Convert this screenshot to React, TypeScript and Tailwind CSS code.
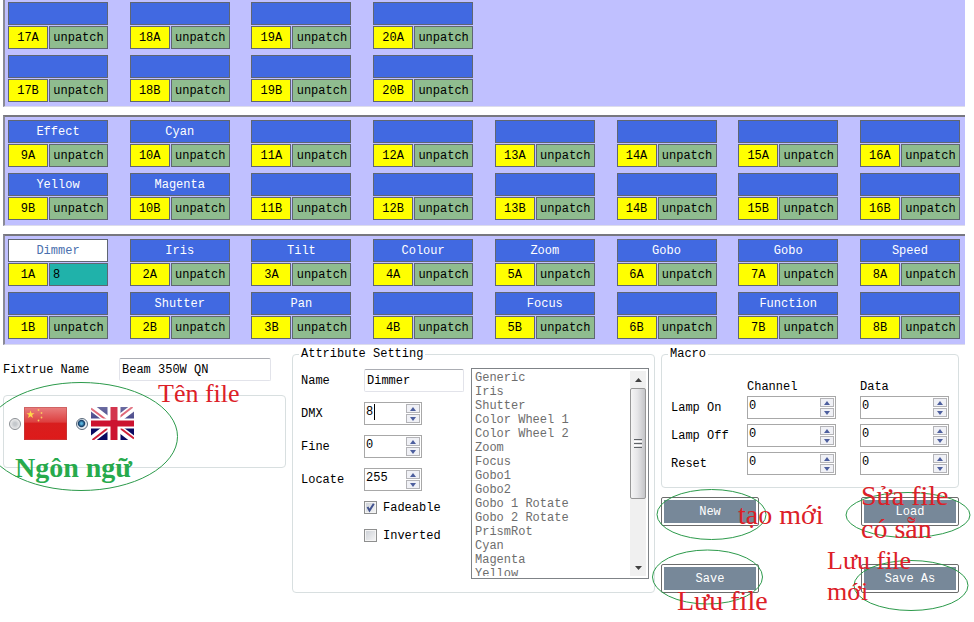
import { useState } from "react"

type Channel = {
  id: string
  name?: string
  value?: string
}

const banks: Channel[][] = [
  [
    { id: "17A" },
    { id: "18A" },
    { id: "19A" },
    { id: "20A" },
    { id: "17B" },
    { id: "18B" },
    { id: "19B" },
    { id: "20B" },
  ],
  [
    { id: "9A", name: "Effect" },
    { id: "10A", name: "Cyan" },
    { id: "11A" },
    { id: "12A" },
    { id: "13A" },
    { id: "14A" },
    { id: "15A" },
    { id: "16A" },
    { id: "9B", name: "Yellow" },
    { id: "10B", name: "Magenta" },
    { id: "11B" },
    { id: "12B" },
    { id: "13B" },
    { id: "14B" },
    { id: "15B" },
    { id: "16B" },
  ],
  [
    { id: "1A", name: "Dimmer", value: "8" },
    { id: "2A", name: "Iris" },
    { id: "3A", name: "Tilt" },
    { id: "4A", name: "Colour" },
    { id: "5A", name: "Zoom" },
    { id: "6A", name: "Gobo" },
    { id: "7A", name: "Gobo" },
    { id: "8A", name: "Speed" },
    { id: "1B" },
    { id: "2B", name: "Shutter" },
    { id: "3B", name: "Pan" },
    { id: "4B" },
    { id: "5B", name: "Focus" },
    { id: "6B" },
    { id: "7B", name: "Function" },
    { id: "8B" },
  ],
]

const attributes = [
  "Generic",
  "Iris",
  "Shutter",
  "Color Wheel 1",
  "Color Wheel 2",
  "Zoom",
  "Focus",
  "Gobo1",
  "Gobo2",
  "Gobo 1 Rotate",
  "Gobo 2 Rotate",
  "PrismRot",
  "Cyan",
  "Magenta",
  "Yellow",
]

function ChannelCell({ channel }: { channel: Channel }) {
  const active = channel.value !== undefined
  return (
    <div className="flex flex-col gap-px">
      <button
        type="button"
        aria-label={channel.name ? undefined : `Channel ${channel.id}`}
        className={
          active
            ? "h-[23px] border border-[#5f6672] bg-white text-[#4a6fae]"
            : "h-[23px] border border-[#5f6672] bg-[#4169e1] text-white"
        }
      >
        {channel.name}
      </button>
      <div className="flex gap-px">
        <label
          htmlFor={`ch-${channel.id}`}
          className="flex h-[23px] w-10 items-center justify-center border border-[#5f6672] bg-[#ffff00]"
        >
          {channel.id}
        </label>
        <input
          id={`ch-${channel.id}`}
          readOnly
          value={channel.value ?? "unpatch"}
          className={
            active
              ? "h-[23px] min-w-0 flex-1 border border-[#5f6672] bg-[#20b2aa] pl-[3px]"
              : "h-[23px] min-w-0 flex-1 border border-[#5f6672] bg-[#8fbc8f] text-center"
          }
        />
      </div>
    </div>
  )
}

// Bank with 4 or 8 columns, the A row above the B row
function Bank({ channels, first }: { channels: Channel[]; first?: boolean }) {
  const perRow = channels.length / 2
  const rows = [channels.slice(0, perRow), channels.slice(perRow)]
  return (
    <section
      className={
        first
          ? "flex flex-col gap-1.5 border-b border-l-2 border-b-[#dcdcec] border-l-[#8a8a96] bg-[#c0c0ff] pt-0.5 pr-[5px] pb-1 pl-[3px]"
          : "flex flex-col gap-1.5 border-t-2 border-b border-l-2 border-t-[#77777f] border-b-[#dcdcec] border-l-[#8a8a96] bg-[#c0c0ff] pt-[3px] pr-[5px] pb-[5px] pl-[3px]"
      }
    >
      {rows.map((row) => (
        <div key={row[0].id} className="grid grid-cols-[repeat(8,100px)] justify-between">
          {row.map((channel) => (
            <ChannelCell key={channel.id} channel={channel} />
          ))}
        </div>
      ))}
    </section>
  )
}

function Spinner({ id, label, initial, caret }: { id: string; label: string; initial: number; caret?: boolean }) {
  const [value, setValue] = useState(initial)
  return (
    <div className="flex h-[23px] border border-[#a8a8a8] bg-white p-px">
      <div className="flex min-w-0 flex-1 items-start">
        <input
          id={id}
          aria-label={label}
          value={value}
          onChange={(e) => setValue(Number(e.target.value) || 0)}
          className={
            caret
              ? "h-4 w-[9px] border-r border-black outline-none"
              : "h-4 w-full min-w-0 outline-none"
          }
        />
      </div>
      <div className="flex w-[14px] flex-col gap-px">
        <button
          type="button"
          aria-label={`${label} up`}
          onClick={() => setValue(value + 1)}
          className="flex flex-1 items-center justify-center border border-[#b4b4b8] bg-[#f0f1f6]"
        >
          <svg width="6" height="4" viewBox="0 0 6 4">
            <path d="M0 4 3 0 6 4z" fill="#4d5f9e" />
          </svg>
        </button>
        <button
          type="button"
          aria-label={`${label} down`}
          onClick={() => setValue(Math.max(0, value - 1))}
          className="flex flex-1 items-center justify-center border border-[#b4b4b8] bg-[#f0f1f6]"
        >
          <svg width="6" height="4" viewBox="0 0 6 4">
            <path d="M0 0 3 4 6 0z" fill="#4d5f9e" />
          </svg>
        </button>
      </div>
    </div>
  )
}

function ChinaFlag() {
  return (
    <svg width="43" height="33" viewBox="0 0 43 33">
      <defs>
        <linearGradient id="cn" x1="0" y1="0" x2="0" y2="1">
          <stop offset="0" stopColor="#e98080" />
          <stop offset="0.45" stopColor="#dd4040" />
          <stop offset="0.5" stopColor="#d81e1e" />
          <stop offset="1" stopColor="#de1a1a" />
        </linearGradient>
      </defs>
      <rect width="43" height="33" fill="url(#cn)" />
      <path d="M6.5 3.5l1 2.8h3l-2.4 1.8.9 2.9-2.5-1.8L4 11l.9-2.9-2.4-1.8h3z" fill="#ffd84a" />
      <g fill="#f8c860">
        <circle cx="14.5" cy="3" r="0.9" />
        <circle cx="17.5" cy="6" r="0.9" />
        <circle cx="17.5" cy="10.5" r="0.9" />
        <circle cx="14.5" cy="13.5" r="0.9" />
      </g>
      <rect x="0.5" y="0.5" width="42" height="32" fill="none" stroke="#b84848" strokeOpacity="0.5" />
    </svg>
  )
}

function UnionJack() {
  return (
    <svg width="43" height="33" viewBox="0 0 43 33">
      <defs>
        <linearGradient id="gloss" x1="0" y1="0" x2="0" y2="1">
          <stop offset="0" stopColor="#fff" stopOpacity="0.4" />
          <stop offset="1" stopColor="#fff" stopOpacity="0.25" />
        </linearGradient>
      </defs>
      <rect width="43" height="33" fill="#0a0a62" />
      <path d="M0 0 43 33M43 0 0 33" stroke="#fff" strokeWidth="7" />
      <path d="M0 1.5 18 15M43 31.5 25 18M41.5 0 24 13.5M1.5 33 19 19.5" stroke="#d02038" strokeWidth="2" />
      <rect width="43" height="13" fill="url(#gloss)" />
      <path d="M23 0v33" stroke="#fff" strokeWidth="13" />
      <path d="M0 16.5h43" stroke="#fff" strokeWidth="10" />
      <path d="M23 0v33" stroke="#cc1230" strokeWidth="7" />
      <path d="M0 16.5h43" stroke="#cc1230" strokeWidth="6" />
      <rect x="19" width="8" height="13" fill="#fff" fillOpacity="0.15" />
    </svg>
  )
}

function LanguagePicker() {
  const [lang, setLang] = useState("en")
  const radio =
    "size-3 appearance-none rounded-full border border-[#8b8f94] bg-[radial-gradient(circle,#c4c8cc_20%,#f0f0f0_75%)] checked:border-[#5a6a7c] checked:bg-[radial-gradient(circle_at_45%_45%,#58b4e0_10%,#123c66_40%,#e8eef4_55%)]"
  return (
    <fieldset className="flex h-[73px] items-start gap-[9px] rounded border border-[#d8dfe0] pt-[11px] pl-[5px]">
      <label className="flex items-center gap-[3px]">
        <input
          type="radio"
          name="lang"
          aria-label="Chinese"
          checked={lang === "zh"}
          onChange={() => setLang("zh")}
          className={radio}
        />
        <ChinaFlag />
      </label>
      <label className="flex items-center gap-[3px]">
        <input
          type="radio"
          name="lang"
          aria-label="English"
          checked={lang === "en"}
          onChange={() => setLang("en")}
          className={radio}
        />
        <UnionJack />
      </label>
    </fieldset>
  )
}

function CheckBox({ label, initial }: { label: string; initial: boolean }) {
  const [checked, setChecked] = useState(initial)
  return (
    <label className="flex h-[13px] items-center gap-1.5">
      <span className="relative size-[13px]">
        <input
          type="checkbox"
          checked={checked}
          onChange={() => setChecked(!checked)}
          className="block size-[13px] appearance-none border border-[#8e8f8f] bg-[linear-gradient(135deg,#cbcfd5,#f6f6f6)] shadow-[inset_0_0_0_1px_#f4f4f4]"
        />
        {checked && (
          <svg className="pointer-events-none absolute inset-0" width="13" height="13" viewBox="0 0 13 13">
            <path d="M3.5 6 5.5 9.5 9.8 2.8" fill="none" stroke="#41528f" strokeWidth="2" />
          </svg>
        )}
      </span>
      {label}
    </label>
  )
}

function AttributeList() {
  return (
    <div className="flex h-[211px] min-w-0 flex-1 border border-[#7f8387] bg-white p-0.5">
      <select
        size={15}
        aria-label="Attributes"
        className="h-full min-w-0 flex-1 overflow-hidden text-[#6d6d6d] outline-none [scrollbar-width:none]"
      >
        {attributes.map((name) => (
          <option key={name} className="h-3.5 min-h-0 p-0 pl-px leading-[14px]">
            {name}
          </option>
        ))}
      </select>
      <div className="flex w-4 flex-col bg-[#f0f0f0]">
        <button type="button" aria-label="Scroll up" className="flex h-[17px] items-center justify-center">
          <svg width="7" height="4" viewBox="0 0 7 4">
            <path d="M0 4 3.5 0 7 4z" fill="#404040" />
          </svg>
        </button>
        <div className="flex h-[111px] flex-col items-center justify-center gap-px rounded-xs border border-[#979797] bg-[linear-gradient(90deg,#f5f5f5,#e6e6e8_45%,#c4c5c8)]">
          <span className="h-px w-2 bg-[#606468]" />
          <span className="h-px w-2 bg-white" />
          <span className="h-px w-2 bg-[#606468]" />
          <span className="h-px w-2 bg-white" />
          <span className="h-px w-2 bg-[#606468]" />
        </div>
        <button type="button" aria-label="Scroll down" className="mt-auto flex h-[17px] items-center justify-center">
          <svg width="7" height="4" viewBox="0 0 7 4">
            <path d="M0 0 3.5 4 7 0z" fill="#404040" />
          </svg>
        </button>
      </div>
    </div>
  )
}

function AttributeSetting() {
  return (
    <fieldset className="h-[246px] min-w-0 rounded border border-[#d8dfe0] pr-[5px] pl-2">
      <legend className="-ml-0.5 px-0.5 leading-[14px]">Attribute Setting</legend>
      <div className="flex items-start gap-[7px] pt-[7px]">
        <div className="grid grid-cols-[63px_100px] items-center gap-y-2.5 pt-px">
          <label htmlFor="attr-name">Name</label>
          <input
            id="attr-name"
            defaultValue="Dimmer"
            className="h-[23px] rounded-xs border border-[#e2e3ea] border-t-[#abadb3] bg-white px-0.5 outline-none"
          />
          <label htmlFor="dmx">DMX</label>
          <div className="w-[58px]">
            <Spinner id="dmx" label="DMX" initial={8} caret />
          </div>
          <label htmlFor="fine">Fine</label>
          <div className="w-[58px]">
            <Spinner id="fine" label="Fine" initial={0} />
          </div>
          <label htmlFor="locate">Locate</label>
          <div className="w-[58px]">
            <Spinner id="locate" label="Locate" initial={255} />
          </div>
          <div className="col-start-2 flex flex-col gap-[15px]">
            <CheckBox label="Fadeable" initial={true} />
            <CheckBox label="Inverted" initial={false} />
          </div>
        </div>
        <AttributeList />
      </div>
    </fieldset>
  )
}

function Macro() {
  return (
    <fieldset className="h-[141px] min-w-0 rounded border border-[#d8dfe0] pr-[9px] pl-[9px]">
      <legend className="-ml-[3px] px-0.5 leading-[14px]">Macro</legend>
      <div className="grid grid-cols-[52px_1fr_1fr] items-center gap-x-6 gap-y-[5px] pt-[22px] whitespace-nowrap">
        <span />
        <span className="leading-2">Channel</span>
        <span className="leading-2">Data</span>
        {["Lamp On", "Lamp Off", "Reset"].map((name) => (
          <div key={name} className="contents">
            <label htmlFor={`${name}-channel`}>{name}</label>
            <Spinner id={`${name}-channel`} label={`${name} channel`} initial={0} />
            <Spinner id={`${name}-data`} label={`${name} data`} initial={0} />
          </div>
        ))}
      </div>
    </fieldset>
  )
}

function ActionButton({ children }: { children: string }) {
  return (
    <button
      type="button"
      className="h-[29px] w-[98px] rounded-xs border border-[#6c6c6c] bg-white p-0.5 text-white"
    >
      <span className="flex h-full items-center justify-center bg-[#778899]">{children}</span>
    </button>
  )
}

// Hand-drawn guide notes laid over the form
function Notes() {
  return (
    <div className="pointer-events-none absolute inset-0 overflow-hidden font-['Liberation_Serif',serif] text-[28px] leading-8 whitespace-nowrap text-[#dc2027]">
      <svg className="absolute top-0 left-0" width="974" height="622" fill="none" stroke="#2c9a4b">
        <ellipse cx="81" cy="436.5" rx="96.5" ry="54" />
        <ellipse cx="711.5" cy="514.5" rx="54.5" ry="25" />
        <ellipse cx="707.5" cy="577" rx="55" ry="27" />
        <ellipse cx="908" cy="515" rx="62" ry="22.5" />
        <ellipse cx="911" cy="585.5" rx="57" ry="25" />
      </svg>
      <span className="absolute top-[378px] left-[158px] text-[26px]">Tên file</span>
      <span className="absolute top-[452px] left-[15px] font-bold text-[#27aa4c]">Ngôn ngữ</span>
      <span className="absolute top-[499px] left-[738px]">tạo mới</span>
      <span className="absolute top-[585px] left-[677px]">Lưu file</span>
      <span className="absolute top-[480px] left-[861px]">Sửa file</span>
      <span className="absolute top-[513px] left-[861px]">có sẵn</span>
      <span className="absolute top-[545px] left-[827px] text-[26px]">Lưu file</span>
      <span className="absolute top-[576px] left-[827px] text-[26px]">mới</span>
    </div>
  )
}

export default function App() {
  return (
    <div className="relative min-h-screen bg-white font-['Liberation_Mono',monospace] text-[12px] leading-4 text-black">
      <div className="flex flex-col gap-2 pr-[9px] pl-[3px]">
        {banks.map((channels, i) => (
          <Bank key={channels[0].id} channels={channels} first={i === 0} />
        ))}
      </div>

      <main className="grid grid-cols-[283fr_363fr_298fr] items-start gap-1.5 pt-0.5 pr-[15px] pl-[3px]">
        <div className="flex min-w-0 flex-col gap-3.5 pt-[11px]">
          <div className="flex items-center pr-[15px]">
            <label htmlFor="fixture" className="w-[116px]">
              Fixtrue Name
            </label>
            <input
              id="fixture"
              defaultValue="Beam 350W QN"
              className="h-[23px] min-w-0 flex-1 rounded-xs border border-[#e2e3ea] border-t-[#abadb3] px-0.5 outline-none"
            />
          </div>
          <LanguagePicker />
        </div>

        <AttributeSetting />

        <div className="flex min-w-0 flex-col">
          <Macro />
          <div className="grid grid-cols-[98px_98px] justify-between gap-y-[38px] pt-[9px]">
            <ActionButton>New</ActionButton>
            <ActionButton>Load</ActionButton>
            <ActionButton>Save</ActionButton>
            <ActionButton>Save As</ActionButton>
          </div>
        </div>
      </main>

      <Notes />
    </div>
  )
}
